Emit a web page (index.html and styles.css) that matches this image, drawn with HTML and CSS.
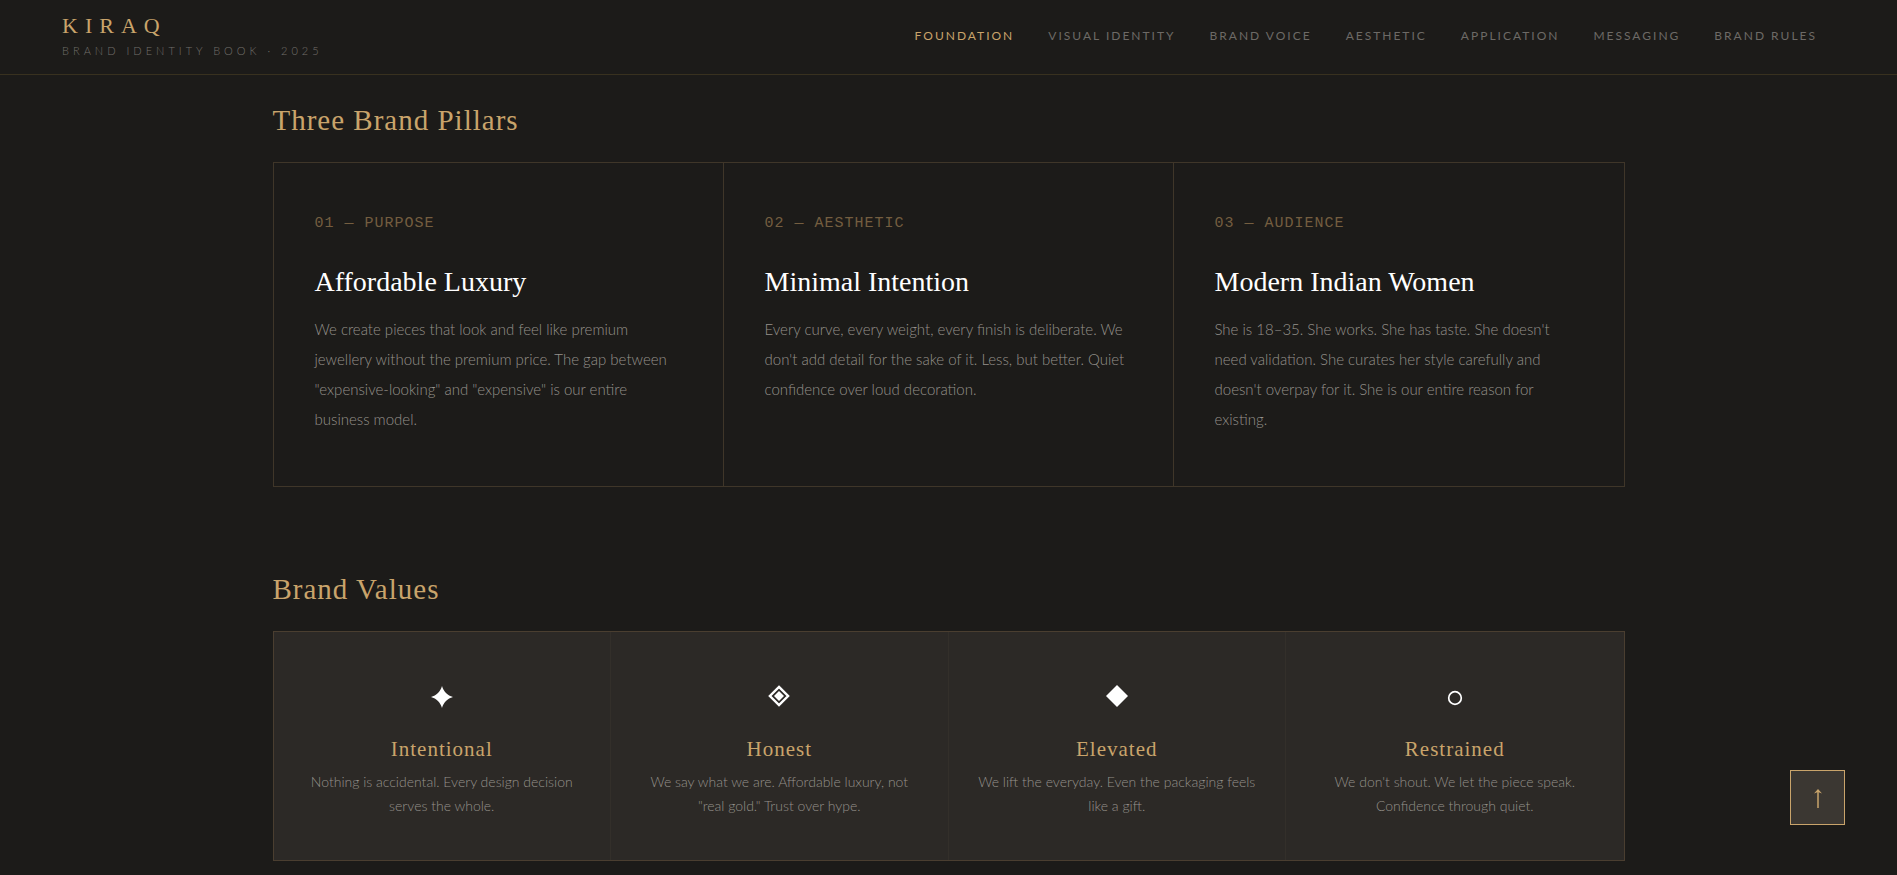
FILE: index.html
```html
<!DOCTYPE html>
<html lang="en">
  <head>
    <meta charset="UTF-8" />
    <meta name="viewport" content="width=device-width, initial-scale=1.0" />
    <title>KIRAQ - Brand Identity Book</title>
    <link rel="stylesheet" href="styles.css">
  </head>
  <body>
    <header class="site-header">
      <div class="brand">
        <a class="brand-name" href="#top">KIRAQ</a>
        <span class="brand-sub">BRAND IDENTITY BOOK · 2025</span>
      </div>
      <nav class="site-nav">
        <a class="active" href="#foundation">FOUNDATION</a>
        <a href="#visual">VISUAL IDENTITY</a>
        <a href="#voice">BRAND VOICE</a>
        <a href="#aesthetic">AESTHETIC</a>
        <a href="#application">APPLICATION</a>
        <a href="#messaging">MESSAGING</a>
        <a href="#rules">BRAND RULES</a>
      </nav>
    </header>

    <main class="content" id="foundation">
      <!-- Brand pillars -->
      <section class="block">
        <h2>Three Brand Pillars</h2>
        <div class="pillars">
          <article class="pillar">
            <div class="pillar-label">01 — PURPOSE</div>
            <h3>Affordable Luxury</h3>
            <p>We create pieces that look and feel like premium jewellery without the premium price. The gap between "expensive-looking" and "expensive" is our entire business model.</p>
          </article>
          <article class="pillar">
            <div class="pillar-label">02 — AESTHETIC</div>
            <h3>Minimal Intention</h3>
            <p>Every curve, every weight, every finish is deliberate. We don't add detail for the sake of it. Less, but better. Quiet confidence over loud decoration.</p>
          </article>
          <article class="pillar">
            <div class="pillar-label">03 — AUDIENCE</div>
            <h3>Modern Indian Women</h3>
            <p>She is 18–35. She works. She has taste. She doesn't need validation. She curates her style carefully and doesn't overpay for it. She is our entire reason for existing.</p>
          </article>
        </div>
      </section>

      <!-- Brand values -->
      <section class="block">
        <h2>Brand Values</h2>
        <div class="values">
          <article class="value">
            <svg class="value-icon" viewBox="0 0 24 24" aria-hidden="true">
              <path d="M12 1C13.5 6.500 17.500 10.500 23 12C17.500 13.500 13.500 17.500 12 23C10.500 17.500 6.500 13.500 1 12C6.500 10.500 10.500 6.500 12 1Z" fill="#fff" />
            </svg>
            <h4>Intentional</h4>
            <p>Nothing is accidental. Every design decision serves the whole.</p>
          </article>
          <article class="value">
            <svg class="value-icon" viewBox="0 0 24 24" aria-hidden="true">
              <path d="M12 1.900L21.100 11L12 20.100L2.900 11Z" fill="none" stroke="#fff" stroke-width="2.400" />
              <path d="M12 6L17 11L12 16L7 11Z" fill="#fff" />
            </svg>
            <h4>Honest</h4>
            <p>We say what we are. Affordable luxury, not "real gold." Trust over hype.</p>
          </article>
          <article class="value">
            <svg class="value-icon" viewBox="0 0 24 24" aria-hidden="true">
              <path d="M12 0L23 11L12 22L1 11Z" fill="#fff" />
            </svg>
            <h4>Elevated</h4>
            <p>We lift the everyday. Even the packaging feels like a gift.</p>
          </article>
          <article class="value">
            <svg class="value-icon" viewBox="0 0 24 24" aria-hidden="true">
              <circle cx="12" cy="13" r="6.300" fill="none" stroke="#fff" stroke-width="1.700" />
            </svg>
            <h4>Restrained</h4>
            <p>We don't shout. We let the piece speak. Confidence through quiet.</p>
          </article>
        </div>
      </section>
    </main>

    <button class="to-top" type="button" aria-label="Back to top">
      <svg viewBox="0 0 12 20" aria-hidden="true">
        <path d="M6 20V2" fill="none" stroke="#c9a46b" stroke-width="1.500" />
        <path d="M2 5.500L6 1L10 5.500L6 4Z" fill="#c9a46b" />
      </svg>
    </button>
  </body>
</html>
```

FILE: styles.css
```css
* {
  box-sizing: border-box;
  margin: 0;
  padding: 0;
}

body {
  background-color: #1c1b19;
  color: #95918b;
  font-family: Lato, "Liberation Sans", sans-serif;
  font-weight: 300;
}

.site-header {
  position: sticky;
  top: 0;
  display: flex;
  justify-content: space-between;
  align-items: flex-start;
  min-height: 75px;
  padding: 12px 80px 12px 62px;
  background-color: #1c1b19;
  border-bottom: 1px solid #38311f;
}

.brand {
  display: flex;
  flex-direction: column;
}

.brand-name {
  color: #c9a46b;
  font-family: "Liberation Serif", serif;
  font-size: 22px;
  font-weight: 400;
  line-height: 28px;
  letter-spacing: 7px;
  text-decoration: none;
}

.brand-sub {
  color: #73706b;
  font-size: 11px;
  font-weight: 300;
  line-height: 22px;
  letter-spacing: 4px;
}

.site-nav {
  display: flex;
  gap: 34px;
}

.site-nav a {
  color: #6d6a66;
  font-size: 12px;
  font-weight: 400;
  line-height: 48px;
  letter-spacing: 2px;
  text-decoration: none;
}

.site-nav a.active {
  color: #c9a46b;
}

.content {
  max-width: 1352px;
  margin: 0 auto;
  padding: 28px 0 85px;
}

.block + .block {
  margin-top: 85px;
}

h2 {
  margin-bottom: 25px;
  color: #c9a46b;
  font-family: "Liberation Serif", serif;
  font-size: 29px;
  font-weight: 400;
  line-height: 34px;
  letter-spacing: 1px;
}

.pillars {
  display: grid;
  grid-template-columns: repeat(3, 1fr);
  border: 1px solid #3f3629;
}

.pillar {
  padding: 51px 41px 52px;
}

.pillar:not(:last-child) {
  border-right: 1px solid #3f3629;
}

.pillar-label {
  margin-bottom: 31px;
  color: #745e40;
  font-family: "Liberation Mono", monospace;
  font-size: 15px;
  font-weight: 400;
  line-height: 20px;
  letter-spacing: 1px;
}

.pillar h3 {
  margin-bottom: 15px;
  color: #fff;
  font-family: "Liberation Serif", serif;
  font-size: 28px;
  font-weight: 400;
  line-height: 34px;
}

.pillar p {
  font-size: 15px;
  line-height: 30px;
}

.values {
  display: grid;
  grid-template-columns: repeat(4, 1fr);
  background-color: #2c2926;
  border: 1px solid #4a3e30;
}

.value {
  display: flex;
  flex-direction: column;
  align-items: center;
  padding: 42px 26px;
  text-align: center;
}

.value:not(:last-child) {
  border-right: 1px solid #332f2a;
}

.value-icon {
  width: 24px;
  height: 24px;
  margin: 11px 0 27px;
}

.value h4 {
  margin-bottom: 8px;
  color: #c9a46b;
  font-family: "Liberation Serif", serif;
  font-size: 21px;
  font-weight: 400;
  line-height: 26px;
  letter-spacing: 1px;
}

.value p {
  font-size: 14px;
  line-height: 24px;
}

.to-top {
  position: fixed;
  right: 52px;
  bottom: 50px;
  display: flex;
  align-items: center;
  justify-content: center;
  width: 55px;
  height: 55px;
  background-color: #3b3732;
  border: 1px solid #c9a46b;
  cursor: pointer;
}

.to-top svg {
  width: 12px;
  height: 20px;
}
```
